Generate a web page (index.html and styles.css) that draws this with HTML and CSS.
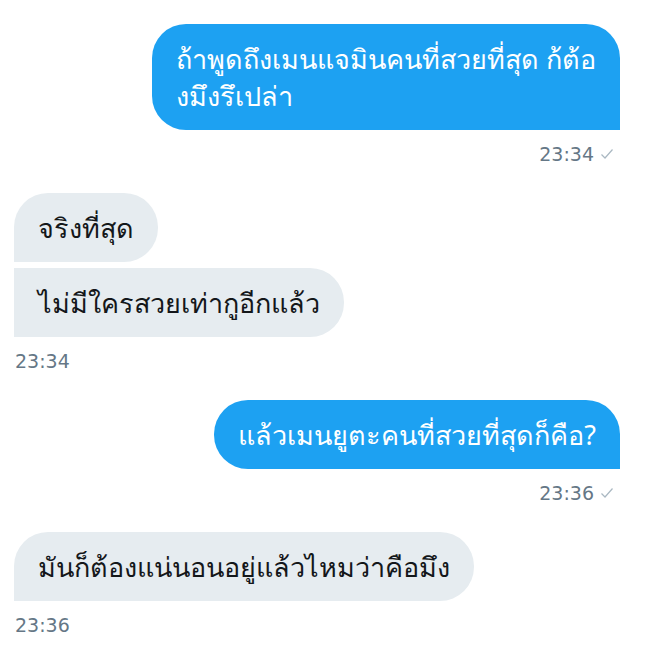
FILE: index.html
```html
<!DOCTYPE html>
<html lang="th">
<head>
<meta charset="utf-8">
<link rel="stylesheet" href="styles.css">
</head>
<body>
<div class="chat">
  <div class="group sent">
    <div class="bubble sent-bubble">ถ้าพูดถึงเมนแจมินคนที่สวยที่สุด ก้ต้อ<br>งมึงรึเปล่า</div>
    <div class="time">23:34 <svg class="check" viewBox="0 0 14 14" width="14" height="14"><path d="M1.5 7.5 L5 11 L12.5 2.5" fill="none" stroke="#aab8c2" stroke-width="1.2"/></svg></div>
  </div>
  <div class="group received">
    <div class="bubble recv-bubble first">จริงที่สุด</div>
    <div class="bubble recv-bubble last">ไม่มีใครสวยเท่ากูอีกแล้ว</div>
    <div class="time">23:34</div>
  </div>
  <div class="group sent">
    <div class="bubble sent-bubble">แล้วเมนยูตะคนที่สวยที่สุดก็คือ?</div>
    <div class="time">23:36 <svg class="check" viewBox="0 0 14 14" width="14" height="14"><path d="M1.5 7.5 L5 11 L12.5 2.5" fill="none" stroke="#aab8c2" stroke-width="1.2"/></svg></div>
  </div>
  <div class="group received">
    <div class="bubble recv-bubble single">มันก็ต้องแน่นอนอยู่แล้วไหมว่าคือมึง</div>
    <div class="time">23:36</div>
  </div>
</div>
</body>
</html>
```

FILE: styles.css
```css
html, body {
  margin: 0;
  padding: 0;
  background: #ffffff;
}
body {
  font-family: "Noto Sans", "DejaVu Sans", sans-serif;
}
.chat {
  display: flex;
  flex-direction: column;
  gap: 29px;
  padding: 24px 31px 0 14px;
}
.group {
  display: flex;
  flex-direction: column;
  gap: 6px;
}
.group.sent {
  align-items: flex-end;
}
.group.received {
  align-items: flex-start;
}
.bubble {
  font-size: 27px;
  line-height: 37px;
  padding: 16px 24px;
  border-radius: 34px;
}
.sent-bubble {
  background: #1da1f2;
  color: #ffffff;
  border-bottom-right-radius: 0;
}
.recv-bubble {
  background: #e6ecf0;
  color: #14171a;
}
.recv-bubble.first {
  border-bottom-left-radius: 0;
}
.recv-bubble.last {
  border-top-left-radius: 0;
  border-bottom-left-radius: 0;
}
.recv-bubble.single {
  border-bottom-left-radius: 0;
}
.time {
  margin-top: 8px;
  font-family: "DejaVu Sans", sans-serif;
  font-size: 19px;
  line-height: 20px;
  color: #657786;
  display: flex;
  align-items: center;
  gap: 6px;
  padding-right: 6px;
}
.received .time {
  padding-right: 0;
  padding-left: 1px;
}
.check {
  display: block;
}
```
